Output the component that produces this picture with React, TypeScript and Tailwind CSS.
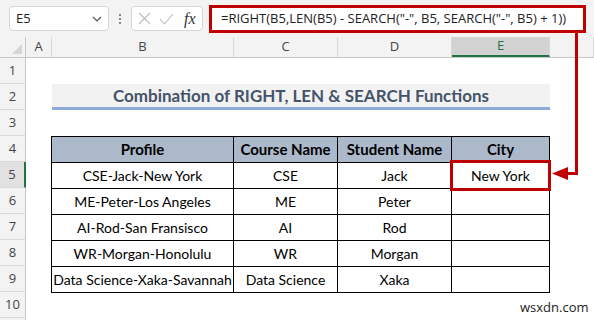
import React from "react";

const rows = [
  ["CSE-Jack-New York", "CSE", "Jack", "New York"],
  ["ME-Peter-Los Angeles", "ME", "Peter", ""],
  ["AI-Rod-San Fransisco", "AI", "Rod", ""],
  ["WR-Morgan-Honolulu", "WR", "Morgan", ""],
  ["Data Science-Xaka-Savannah", "Data Science", "Xaka", ""],
];

const cal = { fontFamily: "Lato, 'Open Sans', sans-serif" };

function RowHead({ n, sel }: { n: number; sel?: boolean }) {
  return (
    <div
      className={
        "h-[26px] flex items-center justify-center text-[13px] text-[#444] border-b border-[#d9d9d9] " +
        (sel ? "bg-[#e1e1e1] border-r-2 border-r-[#217346]" : "bg-[#f3f3f3] border-r border-r-[#c8c8c8]")
      }
      style={{ fontFamily: "'Open Sans', sans-serif" }}
    >
      {n > 10 ? "" : n}
    </div>
  );
}

const widths = ["w-[182px]", "w-[104px]", "w-[114px]", "w-[98px]"];

export default function App() {
  const colHeads = [
    { l: "A", w: "w-[26px]" },
    { l: "B", w: "w-[182px]" },
    { l: "C", w: "w-[104px]" },
    { l: "D", w: "w-[114px]" },
    { l: "E", w: "w-[98px]", sel: true },
    { l: "", w: "flex-1" },
  ];
  return (
    <div className="relative w-[594px] h-[320px] overflow-hidden bg-white">
      {/* toolbar */}
      <div className="h-[37px] bg-[#f3f3f3] flex items-center pl-[9px] gap-0">
        <div className="w-[100px] h-[25px] bg-white border border-[#d6d6d6] rounded-[4px] flex items-center justify-between pl-[6px] pr-[6px] text-[13px] text-[#222]" style={{ fontFamily: "'Open Sans', sans-serif" }}>
          <span>E5</span>
          <svg width="10" height="6" viewBox="0 0 10 6"><path d="M1 1l4 4 4-4" fill="none" stroke="#555" strokeWidth="1.2" /></svg>
        </div>
        <div className="w-[22px] flex flex-col items-center gap-[2px]">
          <span className="w-[2px] h-[2px] bg-[#888]" />
          <span className="w-[2px] h-[2px] bg-[#888]" />
          <span className="w-[2px] h-[2px] bg-[#888]" />
        </div>
        <div className="w-[72px] h-[25px] bg-white border border-[#d6d6d6] rounded-[4px] flex items-center pl-[6px] gap-[8px]">
          <svg width="13" height="13" viewBox="0 0 13 13"><path d="M1 1l11 11M12 1L1 12" stroke="#bbb" strokeWidth="1.1" fill="none" /></svg>
          <svg width="15" height="12" viewBox="0 0 15 12"><path d="M1 6l4.5 5L14 1" stroke="#bbb" strokeWidth="1.1" fill="none" /></svg>
          <span className="text-[16px] italic text-[#333] leading-none ml-[2px]" style={{ fontFamily: "'Liberation Serif', serif" }}>fx</span>
        </div>
        <div className="ml-[6px] w-[377px] h-[28px] bg-white border-[3px] border-[#c00000] flex items-center pl-[9px] text-[13px] text-[#222] whitespace-nowrap" style={{ fontFamily: "'Open Sans', sans-serif" }}>
          =RIGHT(B5,LEN(B5) - SEARCH("-", B5, SEARCH("-", B5) + 1))
        </div>
      </div>

      {/* column headers */}
      <div className="h-[21px] flex bg-[#f3f3f3] border-b border-[#c8c8c8] text-[13px] text-[#444]" style={{ fontFamily: "'Open Sans', sans-serif" }}>
        <div className="w-[26px] border-r border-[#c8c8c8] relative">
          <svg className="absolute right-[3px] bottom-[3px]" width="10" height="10" viewBox="0 0 10 10"><path d="M10 0V10H0Z" fill="#d4d4d4" /></svg>
        </div>
        {colHeads.map((c, i) => (
          <div
            key={i}
            className={
              c.w +
              " flex items-center justify-center border-r border-[#d9d9d9] " +
              (c.sel ? "bg-[#d2d2d2] border-b-2 border-b-[#217346] text-[#217346]" : "")
            }
          >
            {c.l}
          </div>
        ))}
      </div>

      {/* sheet */}
      <div className="flex">
        <div className="w-[26px] flex flex-col">
          {[1, 2, 3, 4, 5, 6, 7, 8, 9, 10, 11].map((n) => (
            <RowHead key={n} n={n} sel={n === 5} />
          ))}
        </div>
        <div className="flex-1 flex flex-col" style={cal}>
          <div className="h-[26px]" />
          <div className="h-[26px] flex">
            <div className="w-[26px]" />
            <div className="w-[498px] bg-[#f2f2f2] border-b-[3px] border-[#8eaadb] flex items-center justify-center text-[17px] font-bold text-[#44546a]">
              Combination of RIGHT, LEN &amp; SEARCH Functions
            </div>
          </div>
          <div className="h-[26px]" />
          <div className="flex">
            <div className="w-[25px]" />
            <div className="border-t border-l border-black text-[14px] text-black">
              <div className="flex h-[26px] bg-[#acb9ca] font-bold text-[15px]">
                {["Profile", "Course Name", "Student Name", "City"].map((h, i) => (
                  <div key={i} className={widths[i] + " border-r border-b border-black flex items-center justify-center"}>
                    {h}
                  </div>
                ))}
              </div>
              {rows.map((r, ri) => (
                <div key={ri} className="flex h-[26px]">
                  {r.map((v, i) => (
                    <div
                      key={i}
                      className={widths[i] + " border-r border-b border-black flex items-center justify-center whitespace-nowrap"}
                    >
                      {v}
                    </div>
                  ))}
                </div>
              ))}
            </div>
          </div>
        </div>
      </div>

      {/* highlight box on E5 */}
      <div className="absolute left-[450px] top-[160px] w-[101px] h-[31px] border-[3px] border-[#c00000]" />
      {/* arrow */}
      <div className="absolute left-[575px] top-[33px] w-[3px] h-[142px] bg-[#c00000]" />
      <div className="absolute left-[566px] top-[172px] w-[12px] h-[3px] bg-[#c00000]" />
      <svg className="absolute left-[552px] top-[167px]" width="16" height="13" viewBox="0 0 16 13">
        <path d="M0 6.5L16 0V13Z" fill="#c00000" />
      </svg>

      <div className="absolute left-[520px] top-[298px] text-[13px] text-[#222]" style={{ fontFamily: "'Open Sans', sans-serif" }}>
        wsxdn.com
      </div>
    </div>
  );
}
